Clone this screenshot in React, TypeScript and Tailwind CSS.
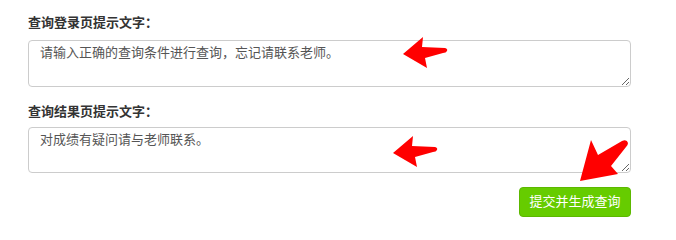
import { useState } from "react";

function ArrowLeft({ className }: { className?: string }) {
  return (
    <svg className={className} width="46" height="32" viewBox="0 0 46 32" fill="#ff0000">
      <path d="M0 17 L20 0 L19 10 L42 11 Q45 12 44 14 Q43 16 40 16 L22 21 L24 31 Z" />
    </svg>
  );
}

function ArrowDown({ className }: { className?: string }) {
  return (
    <svg className={className} width="50" height="44" viewBox="0 0 50 44" fill="#ff0000">
      <path d="M0 42 L11 1 L18 16 L42 2 Q47 0 48 4 Q48 6 46 8 L31 27 L38 35 Z" />
    </svg>
  );
}

export default function App() {
  const [loginTip, setLoginTip] = useState("请输入正确的查询条件进行查询，忘记请联系老师。");
  const [resultTip, setResultTip] = useState("对成绩有疑问请与老师联系。");

  const font = "font-['Liberation_Sans','Noto_Sans_CJK_SC',sans-serif]";

  return (
    <div className={`relative w-[676px] h-[228px] bg-white ${font}`}>
      <div className="w-[603px] ml-[28px] pt-[13px]">
        <label className="block text-[13px] leading-5 font-bold text-[#333] mb-[7px]">查询登录页提示文字：</label>
        <textarea
          value={loginTip}
          onChange={(e) => setLoginTip(e.target.value)}
          className="block w-full h-[47px] border border-[#ccc] rounded-[4px] px-[11px] pt-[2px] text-[13px] leading-5 text-[#555] outline-none"
        />

        <label className="block text-[13px] leading-5 font-bold text-[#333] mt-[15px] mb-[5px]">查询结果页提示文字：</label>
        <textarea
          value={resultTip}
          onChange={(e) => setResultTip(e.target.value)}
          className="block w-full h-[46px] border border-[#ccc] rounded-[4px] px-[11px] pt-[2px] text-[13px] leading-5 text-[#555] outline-none"
        />

        <div className="flex justify-end mt-[14px]">
          <button className="w-[112px] h-[30px] rounded-[4px] bg-[#66cc00] border border-[#5cb800] text-white text-[13px]">
            提交并生成查询
          </button>
        </div>
      </div>

      {/* red annotation arrows */}
      <ArrowLeft className="absolute left-[403px] top-[37px]" />
      <ArrowLeft className="absolute left-[393px] top-[136px]" />
      <ArrowDown className="absolute left-[580px] top-[139px]" />
    </div>
  );
}
